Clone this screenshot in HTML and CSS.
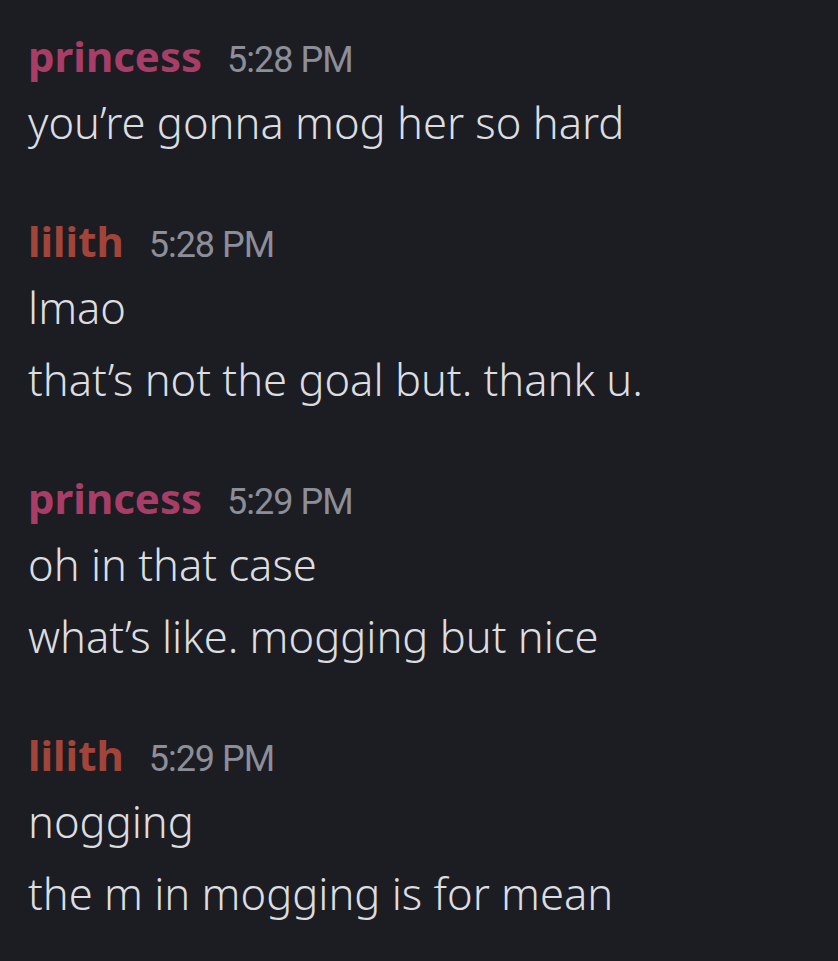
FILE: index.html
```html
<!DOCTYPE html>
<html lang="en">
<head>
    <meta charset="UTF-8" />
    <title>Chat</title>
    <link rel="stylesheet" href="styles.css">
</head>
<body>
    <div class="chat">
        <div class="message-group">
            <div class="message-header">
                <span class="author author-princess">princess</span>
                <span class="time">5:28 PM</span>
            </div>
            <div class="message-line">you’re gonna mog her so hard</div>
        </div>
        <div class="message-group">
            <div class="message-header">
                <span class="author author-lilith">lilith</span>
                <span class="time">5:28 PM</span>
            </div>
            <div class="message-line">lmao</div>
            <div class="message-line">that’s not the goal but. thank u.</div>
        </div>
        <div class="message-group">
            <div class="message-header">
                <span class="author author-princess">princess</span>
                <span class="time">5:29 PM</span>
            </div>
            <div class="message-line">oh in that case</div>
            <div class="message-line">what’s like. mogging but nice</div>
        </div>
        <div class="message-group">
            <div class="message-header">
                <span class="author author-lilith">lilith</span>
                <span class="time">5:29 PM</span>
            </div>
            <div class="message-line">nogging</div>
            <div class="message-line">the m in mogging is for mean</div>
        </div>
    </div>
</body>
</html>
```

FILE: styles.css
```css
body {
    margin: 0;
    padding: 0;
    background-color: #1c1d22;
    font-family: "Noto Sans", sans-serif;
}
.chat {
    padding: 25px 28px 0 28px;
}
.message-group {
    margin-bottom: 52px;
}
.message-header {
    display: flex;
    align-items: baseline;
    gap: 25px;
    height: 61px;
}
.author {
    font-size: 42px;
    font-weight: bold;
    line-height: 61px;
}
.author-princess {
    color: #a83d68;
}
.author-lilith {
    color: #a1443a;
}
.time {
    font-family: Roboto, sans-serif;
    font-size: 36px;
    color: #8c8e99;
    letter-spacing: -1px;
}
.message-line {
    font-size: 43.5px;
    font-weight: 300;
    line-height: 72px;
    color: #dcdde1;
}
```
